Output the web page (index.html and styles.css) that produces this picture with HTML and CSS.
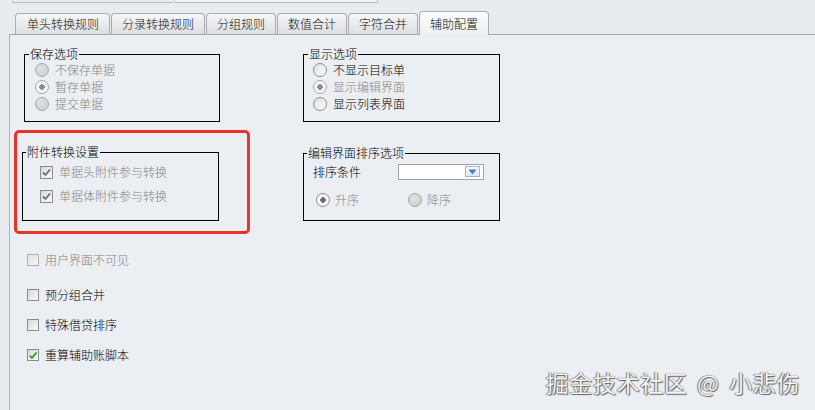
FILE: index.html
```html
<!DOCTYPE html>
<html lang="zh-CN">
<head>
<meta charset="utf-8">
<link rel="stylesheet" href="styles.css">
</head>
<body>
<div class="topbar"><div class="tb-a"></div><div class="tb-b"></div></div>
<div class="tabs">
  <div class="tab">单头转换规则</div>
  <div class="tab">分录转换规则</div>
  <div class="tab">分组规则</div>
  <div class="tab">数值合计</div>
  <div class="tab">字符合并</div>
  <div class="tab active">辅助配置</div>
</div>
<div class="panel">
  <div class="grid">
    <fieldset class="group g1">
      <legend>保存选项</legend>
      <div class="body b1">
        <div class="opt dis"><span class="radio r-dis"></span>不保存单据</div>
        <div class="opt dis"><span class="radio r-dis-on"></span>暂存单据</div>
        <div class="opt dis"><span class="radio r-dis"></span>提交单据</div>
      </div>
    </fieldset>
    <fieldset class="group g2">
      <legend>显示选项</legend>
      <div class="body b2">
        <div class="opt"><span class="radio r-en"></span>不显示目标单</div>
        <div class="opt dis"><span class="radio r-dis-on"></span>显示编辑界面</div>
        <div class="opt"><span class="radio r-en"></span>显示列表界面</div>
      </div>
    </fieldset>
    <div class="redbox">
      <fieldset class="group g3">
        <legend>附件转换设置</legend>
        <div class="body b3">
          <div class="opt dis"><span class="check"><svg width="11" height="11" viewBox="0 0 11 11"><path d="M2 5.5 L4.5 8 L9 2.5" fill="none" stroke="#6f6f6f" stroke-width="1.8"/></svg></span>单据头附件参与转换</div>
          <div class="opt dis"><span class="check"><svg width="11" height="11" viewBox="0 0 11 11"><path d="M2 5.5 L4.5 8 L9 2.5" fill="none" stroke="#6f6f6f" stroke-width="1.8"/></svg></span>单据体附件参与转换</div>
        </div>
      </fieldset>
    </div>
    <fieldset class="group g4">
      <legend>编辑界面排序选项</legend>
      <div class="body b4">
        <div class="sortrow">
          <span class="lbl">排序条件</span>
          <div class="combo"><span class="dd"><svg width="9" height="6" viewBox="0 0 9 6"><path d="M0.5 0.5 H8.5 L4.5 5.5 Z" fill="#3f7fd0"/></svg></span></div>
        </div>
        <div class="radiorow">
          <div class="opt dis asc"><span class="radio r-on"></span>升序</div>
          <div class="opt dis"><span class="radio r-dis"></span>降序</div>
        </div>
      </div>
    </fieldset>
  </div>
  <div class="checklist">
    <div class="opt dis c1"><span class="check cdis"></span>用户界面不可见</div>
    <div class="opt c2"><span class="check"></span>预分组合并</div>
    <div class="opt c3"><span class="check"></span>特殊借贷排序</div>
    <div class="opt c3"><span class="check"><svg width="11" height="11" viewBox="0 0 11 11"><path d="M1.8 5.6 L4.4 8.2 L9.4 2.2" fill="none" stroke="#21a02a" stroke-width="2"/></svg></span>重算辅助账脚本</div>
  </div>
</div>
<div class="watermark">掘金技术社区 @ 小悲伤</div>
</body>
</html>
```
FILE: styles.css
```css
* { box-sizing: border-box; }
html, body { margin: 0; padding: 0; }
body {
  width: 815px;
  height: 410px;
  overflow: hidden;
  position: relative;
  background: #e8ecf0;
  font-family: "Noto Sans CJK SC", "Noto Sans", sans-serif;
  font-size: 12px;
  font-weight: 300;
  color: #000;
}
.topbar { height: 11px; display: flex; }
.tb-a { width: 161px; margin-left: 12px; height: 3px; border-left: 1px solid #c8ccd0; border-bottom: 1px solid #b8bcc0; }
.tb-b { width: 204px; margin-left: 1px; height: 3px; background: #f2f4f6; border-left: 1px solid #c8ccd0; border-right: 1px solid #c0c4c8; border-bottom: 1px solid #b8bcc0; }

.tabs {
  display: flex;
  align-items: flex-end;
  gap: 1px;
  height: 23px;
  padding-left: 15px;
  position: relative;
  z-index: 2;
}
.tab {
  height: 21px;
  padding: 0 10px;
  border: 1px solid #a9adb2;
  border-bottom: none;
  border-radius: 4px 4px 0 0;
  background: linear-gradient(#f6f7f8, #dcdee1);
  line-height: 20px;
  font-size: 12px;
  color: #111;
  white-space: nowrap;
}
.tab:first-child { padding-left: 11px; }
.tab.active {
  height: 24px;
  margin-bottom: -1px;
  background: linear-gradient(#fbfcfd, #edf0f3);
  line-height: 24px;
}

.panel {
  margin-left: 9px;
  height: 376px;
  border-top: 1px solid #a4a8ad;
  border-left: 1px solid #aeb2b6;
  background: #ebeef2;
  padding: 12px 0 0 4px;
}
.grid {
  display: grid;
  grid-template-columns: 289px 197px;
  row-gap: 8px;
  align-items: start;
}
.group {
  margin: 0;
  padding: 0;
  border: 1px solid #000;
  min-width: 0;
  width: 197px;
}
.group legend {
  padding: 0 1px;
  margin-left: 4px;
  line-height: 14px;
  font-size: 12px;
  color: #000;
}
.g1 { margin-left: 10px; width: 196px; }
.g3 legend, .g4 legend { margin-left: 3px; }
.g4 { margin-top: 16px; }

.body { display: flex; flex-direction: column; }
.b1 { padding: 0 0 9px 10px; }
.b2 { padding: 0 0 9px 9px; }
.b3 { padding: 4px 0 15px 17px; gap: 6px; }
.b4 { padding: 3px 0 12px 9px; }

.opt {
  display: flex;
  align-items: center;
  height: 17px;
  line-height: 17px;
  gap: 6px;
  font-size: 12px;
  white-space: nowrap;
}
.b3 .opt { height: 18px; line-height: 18px; }
.dis { color: #858585; }

.radio {
  width: 14px;
  height: 14px;
  border-radius: 50%;
  border: 1px solid #9c9c9c;
  flex: none;
}
.r-dis { background: radial-gradient(circle at 40% 35%, #e2e2e2, #c9c9c9); border-color: #a8a8a8; }
.r-dis-on { background: radial-gradient(circle, #8c8c8c 0 2.5px, #f3f3f3 3px); border-color: #a8a8a8; }
.r-en { background: linear-gradient(135deg, #dedede, #ffffff); border-color: #8b8b8b; }
.r-on { background: radial-gradient(circle, #6e6e6e 0 2.5px, #f6f6f6 3px); border-color: #8f8f8f; }

.redbox {
  width: 236px;
  border: 3px solid #e8332c;
  border-radius: 5px;
  padding: 12px 0 10px 5px;
}

.sortrow { display: flex; align-items: center; height: 17px; }
.lbl { font-size: 12px; width: 85px; line-height: 17px; }
.combo {
  width: 86px;
  height: 16px;
  background: #fff;
  border: 1px solid #9aa4ae;
  display: flex;
  justify-content: flex-end;
  align-items: center;
  padding-right: 3px;
}
.dd {
  width: 15px;
  height: 11px;
  border: 1px solid #9fb6cf;
  background: linear-gradient(#f7f9fc, #dfe7f1);
  display: flex;
  align-items: center;
  justify-content: center;
}
.radiorow { display: flex; margin-top: 11px; padding-left: 3px; }
.radiorow .opt { gap: 5px; }
.radiorow .asc { width: 92px; }

.check {
  width: 13px;
  height: 13px;
  border: 1px solid #8c8c8c;
  background: linear-gradient(135deg, #d8d8d8, #fbfbfb);
  flex: none;
  display: flex;
  align-items: center;
  justify-content: center;
}
.check.cdis { border-color: #b0b0b0; background: linear-gradient(135deg, #e2e2e2, #f6f6f6); }

.checklist { display: flex; flex-direction: column; padding-left: 13px; margin-top: 17px; }
.checklist .opt { height: 18px; line-height: 18px; gap: 6px; }
.checklist .check { width: 12px; height: 12px; }
.checklist .c2 { margin-top: 17px; }
.checklist .c3 { margin-top: 12px; }

.watermark {
  position: absolute;
  right: 15px;
  bottom: 14px;
  font-size: 23px;
  line-height: 28px;
  font-weight: 400;
  letter-spacing: 0.6px;
  word-spacing: 4px;
  color: #f4f4f4;
  text-shadow: 0 0 1px #555, 1px 1px 1px #666, -1px 0 1px #888;
}
```
